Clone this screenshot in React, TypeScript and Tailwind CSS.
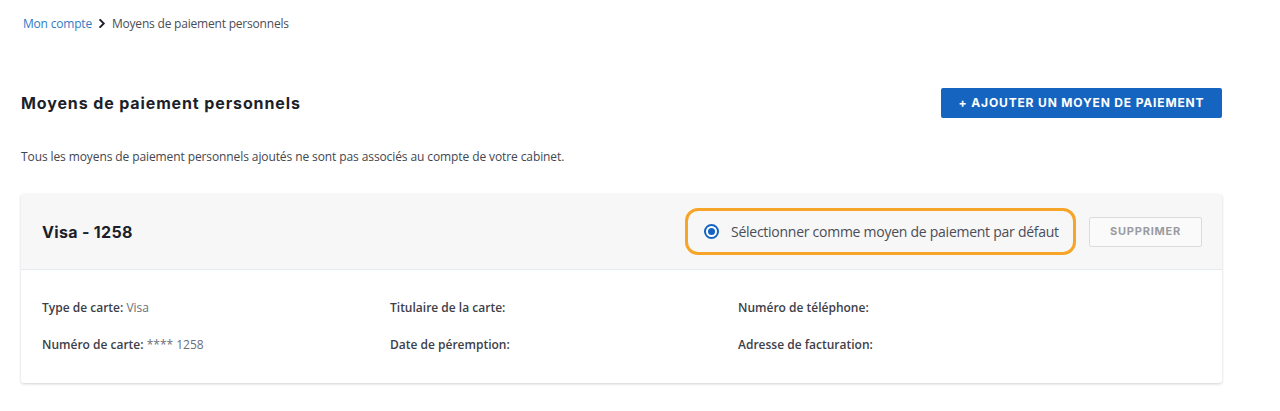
import React from 'react';

const heading = "font-['Inter','Liberation_Sans',sans-serif]";
const body = "font-['Open_Sans','Noto_Sans',sans-serif]";

type Field = { label: string; value?: string };

const rows: Field[][] = [
  [{ label: 'Type de carte:', value: 'Visa' }, { label: 'Titulaire de la carte:' }, { label: 'Numéro de téléphone:' }],
  [{ label: 'Numéro de carte:', value: '**** 1258' }, { label: 'Date de péremption:' }, { label: 'Adresse de facturation:' }],
];

const Chevron: React.FC = () => (
  <svg width="8" height="9" viewBox="0 0 8 10" className="mx-[6px]" aria-hidden>
    <path d="M2 1l4 4-4 4" fill="none" stroke="#1c1f2a" strokeWidth="2" strokeLinecap="square" />
  </svg>
);

export default function App() {
  return (
    <div className={`min-h-[411px] w-[1280px] bg-white ${body}`}>
      <div className="pl-[21px] pr-[58px]">
        {/* breadcrumb */}
        <nav className="flex items-center pt-[15px] pl-[2px] text-[12px] leading-[17px] tracking-[-0.2px]">
          <a className="text-[#2f7bc4]">Mon compte</a>
          <Chevron />
          <span className="text-[#4a4d57]">Moyens de paiement personnels</span>
        </nav>

        <div className="mt-[56px] flex items-center justify-between">
          <h1 className={`${heading} text-[16px] font-bold tracking-[0.055em] text-[#1c1f2a]`}>Moyens de paiement personnels</h1>
          <button
            className={`${heading} h-[30px] w-[281px] rounded-[2px] bg-[#1565c0] text-[12px] font-bold uppercase tracking-[0.07em] text-white`}
          >
            + Ajouter un moyen de paiement
          </button>
        </div>

        <p className="mt-[31px] text-[12px] leading-[16px] tracking-[-0.1px] text-[#43464f]">
          Tous les moyens de paiement personnels ajoutés ne sont pas associés au compte de votre cabinet.
        </p>

        <section className="mt-[29px] overflow-hidden rounded-[3px] bg-white shadow-[0_1px_3px_rgba(0,0,0,0.18)]">
          <header className="flex h-[76px] items-center justify-between border-b border-[#e3eaf2] bg-[#f7f7f7] pl-[21px] pr-[20px]">
            <h2 className={`${heading} text-[16px] font-bold tracking-[0.02em] text-[#1c1f2a]`}>Visa - 1258</h2>
            <div className="flex items-center">
              <label className="flex h-[47px] w-[391px] items-center gap-[12px] rounded-[13px] border-[3px] border-[#f7a528] pl-[16px] text-[14px] tracking-[-0.26px] text-[#4a4d57]">
                <span className="flex h-[15px] w-[15px] items-center justify-center rounded-full border-[2px] border-[#1565c0] bg-white">
                  <span className="h-[7px] w-[7px] rounded-full bg-[#1565c0]" />
                </span>
                Sélectionner comme moyen de paiement par défaut
              </label>
              <button
                className={`${heading} ml-[13px] h-[30px] w-[113px] rounded-[2px] border border-[#dcdcdc] bg-[#fafafa] text-[11px] font-bold uppercase tracking-[0.07em] text-[#9a9ba0]`}
              >
                Supprimer
              </button>
            </div>
          </header>

          <div className="flex flex-col gap-[21px] pl-[21px] pt-[30px] pb-[30px] text-[12px] leading-[16px]">
            {rows.map((row, i) => (
              <div key={i} className="grid grid-cols-[348px_348px_1fr]">
                {row.map((f) => (
                  <div key={f.label}>
                    <span className="font-semibold text-[#3d4049]">{f.label}</span>
                    {f.value && <span className="text-[#6b6e76]"> {f.value}</span>}
                  </div>
                ))}
              </div>
            ))}
          </div>
        </section>
      </div>
    </div>
  );
}
